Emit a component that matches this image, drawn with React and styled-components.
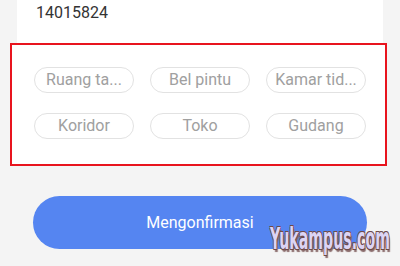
import styled, { createGlobalStyle } from "styled-components";

const rooms = [
  { id: 1, label: "Ruang ta..." },
  { id: 2, label: "Bel pintu" },
  { id: 3, label: "Kamar tid..." },
  { id: 4, label: "Koridor" },
  { id: 5, label: "Toko" },
  { id: 6, label: "Gudang" },
];

const App = () => {
  return (
    <Page>
      <GlobalStyle />
      <Card>
        <DeviceId>14015824</DeviceId>
        <RoomPanel>
          {rooms.map(({ id, label }) => (
            <RoomChip key={id}>{label}</RoomChip>
          ))}
        </RoomPanel>
      </Card>
      <ConfirmButton type="button">Mengonfirmasi</ConfirmButton>
      <Watermark>Yukampus.com</Watermark>
    </Page>
  );
};

export default App;

const GlobalStyle = createGlobalStyle`
  html, body {
    margin: 0;
    padding: 0;
    background: #f4f4f4;
    font-family: Roboto, "Noto Sans", sans-serif;
  }
`;

const Page = styled.div`
  position: relative;
  width: 400px;
  height: 266px;
  overflow: hidden;
  background: #f4f4f4;
`;

const Card = styled.div`
  margin: 0 17px;
  background: #ffffff;
  padding-top: 3px;
`;

const DeviceId = styled.div`
  padding-left: 19px;
  font-size: 16px;
  line-height: 20px;
  color: #333333;
  height: 40px;
`;

const RoomPanel = styled.div`
  box-sizing: border-box;
  height: 123px;
  margin: 0 -4px 0 -7px;
  padding: 22px 0 0 22px;
  border: 2px solid #e8141e;
  background: #ffffff;
  display: grid;
  grid-template-columns: repeat(3, 100px);
  grid-auto-rows: 26px;
  column-gap: 16px;
  row-gap: 20px;
  align-content: start;
`;

const RoomChip = styled.div`
  box-sizing: border-box;
  height: 26px;
  border: 1px solid #e2e2e2;
  border-radius: 13px;
  color: #a0a0a0;
  font-size: 16px;
  line-height: 24px;
  text-align: center;
  white-space: nowrap;
`;

const ConfirmButton = styled.button`
  display: block;
  margin: 30px auto 0;
  width: 334px;
  height: 53px;
  border: none;
  border-radius: 27px;
  background: #5585f1;
  color: #ffffff;
  font-family: Roboto, sans-serif;
  font-size: 16px;
`;

const Watermark = styled.div`
  position: absolute;
  left: 270px;
  top: 224px;
  font-family: "DejaVu Sans", sans-serif;
  font-weight: 700;
  font-size: 24px;
  line-height: 1;
  white-space: nowrap;
  color: #dcd4f4;
  transform: scale(0.59, 1.25);
  transform-origin: left top;
  text-shadow: 1px 1px 0 #6e4a4a, -1px -1px 0 #6e4a4a, 1px -1px 0 #6e4a4a,
    -1px 1px 0 #6e4a4a, 2px 2px 1px #8a6b6b;
`;
